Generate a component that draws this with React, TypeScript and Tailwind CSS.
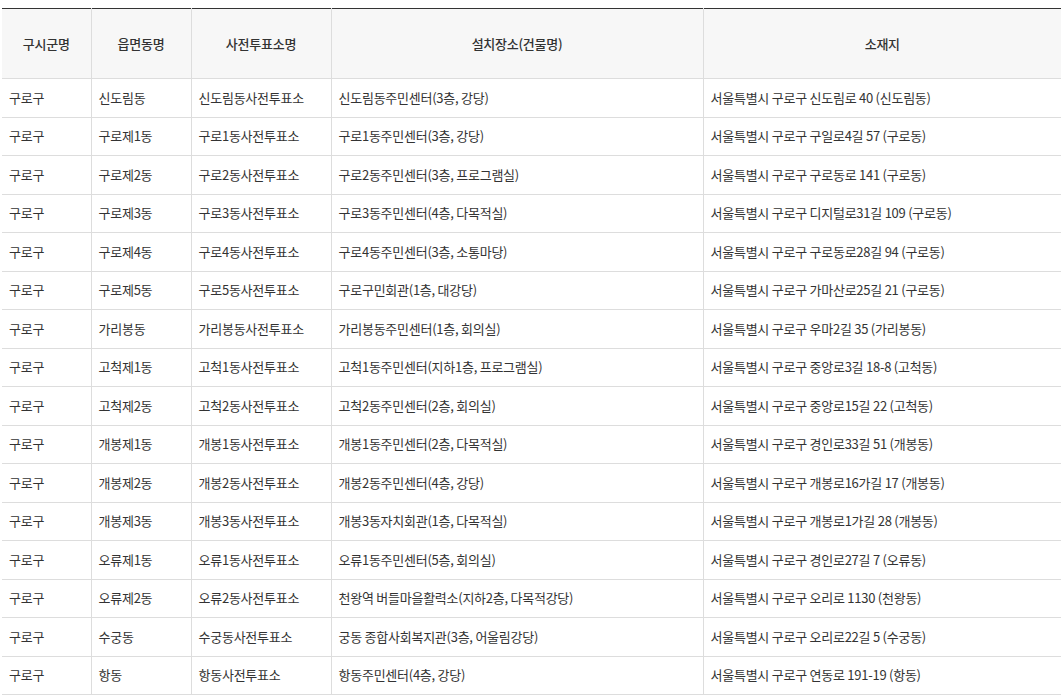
const rows: [string, string, string, string, string][] = [
  ["구로구", "신도림동", "신도림동사전투표소", "신도림동주민센터(3층, 강당)", "서울특별시 구로구 신도림로 40 (신도림동)"],
  ["구로구", "구로제1동", "구로1동사전투표소", "구로1동주민센터(3층, 강당)", "서울특별시 구로구 구일로4길 57 (구로동)"],
  ["구로구", "구로제2동", "구로2동사전투표소", "구로2동주민센터(3층, 프로그램실)", "서울특별시 구로구 구로동로 141 (구로동)"],
  ["구로구", "구로제3동", "구로3동사전투표소", "구로3동주민센터(4층, 다목적실)", "서울특별시 구로구 디지털로31길 109 (구로동)"],
  ["구로구", "구로제4동", "구로4동사전투표소", "구로4동주민센터(3층, 소통마당)", "서울특별시 구로구 구로동로28길 94 (구로동)"],
  ["구로구", "구로제5동", "구로5동사전투표소", "구로구민회관(1층, 대강당)", "서울특별시 구로구 가마산로25길 21 (구로동)"],
  ["구로구", "가리봉동", "가리봉동사전투표소", "가리봉동주민센터(1층, 회의실)", "서울특별시 구로구 우마2길 35 (가리봉동)"],
  ["구로구", "고척제1동", "고척1동사전투표소", "고척1동주민센터(지하1층, 프로그램실)", "서울특별시 구로구 중앙로3길 18-8 (고척동)"],
  ["구로구", "고척제2동", "고척2동사전투표소", "고척2동주민센터(2층, 회의실)", "서울특별시 구로구 중앙로15길 22 (고척동)"],
  ["구로구", "개봉제1동", "개봉1동사전투표소", "개봉1동주민센터(2층, 다목적실)", "서울특별시 구로구 경인로33길 51 (개봉동)"],
  ["구로구", "개봉제2동", "개봉2동사전투표소", "개봉2동주민센터(4층, 강당)", "서울특별시 구로구 개봉로16가길 17 (개봉동)"],
  ["구로구", "개봉제3동", "개봉3동사전투표소", "개봉3동자치회관(1층, 다목적실)", "서울특별시 구로구 개봉로1가길 28 (개봉동)"],
  ["구로구", "오류제1동", "오류1동사전투표소", "오류1동주민센터(5층, 회의실)", "서울특별시 구로구 경인로27길 7 (오류동)"],
  ["구로구", "오류제2동", "오류2동사전투표소", "천왕역 버들마을활력소(지하2층, 다목적강당)", "서울특별시 구로구 오리로 1130 (천왕동)"],
  ["구로구", "수궁동", "수궁동사전투표소", "궁동 종합사회복지관(3층, 어울림강당)", "서울특별시 구로구 오리로22길 5 (수궁동)"],
  ["구로구", "항동", "항동사전투표소", "항동주민센터(4층, 강당)", "서울특별시 구로구 연동로 191-19 (항동)"],
];

const headers = ["구시군명", "읍면동명", "사전투표소명", "설치장소(건물명)", "소재지"];
const widths = ["w-[89px]", "w-[100px]", "w-[140px]", "w-[372px]", "w-[358px]"];

export default function App() {
  return (
    <div className="min-h-[698px] bg-white pt-[8px] pl-[2px] font-['Noto_Sans_CJK_KR','Noto_Sans',sans-serif] text-[13px] tracking-[-0.25px] text-[#333]">
      <table className="w-[1059px] table-fixed border-collapse border-t-[1.5px] border-t-[#333]">
        <colgroup>
          {widths.map((w, i) => (
            <col key={i} className={w} />
          ))}
        </colgroup>
        <thead>
          <tr className="h-[70px] bg-[#f7f7f7]">
            {headers.map((h, i) => (
              <th
                key={h}
                className={
                  "border-b border-[#ddd] text-center font-medium text-[#333] " +
                  (i > 0 ? "border-l" : "")
                }
              >
                {h}
              </th>
            ))}
          </tr>
        </thead>
        <tbody>
          {rows.map((r, ri) => (
            <tr key={ri} className="h-[38.5px]">
              {r.map((c, ci) => (
                <td
                  key={ci}
                  className={
                    "border-b border-[#ddd] px-[7px] py-0 text-left leading-[18px] " +
                    (ci > 0 ? "border-l" : "")
                  }
                >
                  {c}
                </td>
              ))}
            </tr>
          ))}
        </tbody>
      </table>
    </div>
  );
}
